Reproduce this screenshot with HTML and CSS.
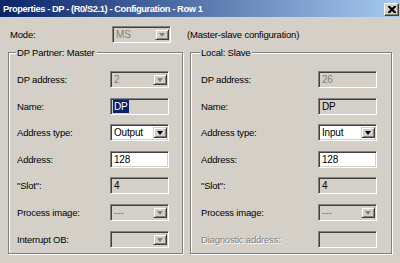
FILE: index.html
```html
<!DOCTYPE html>
<html lang="en">
<head>
    <meta charset="UTF-8">
    <title>Properties - DP - (R0/S2.1) - Configuration - Row 1</title>
    <link rel="stylesheet" href="styles.css">
</head>
<body>
    <div class="window">
        <div class="titlebar">
            <span class="title">Properties - DP - (R0/S2.1) - Configuration - Row 1</span>
            <button class="close-btn">
                <svg width="8" height="7" viewBox="0 0 8 7">
                    <path d="M0 0h2l2 2 2-2h2v1l-2.5 2.5L8 6v1H6L4 5 2 7H0V6l2.5-2.5L0 1z" fill="#000"/>
                </svg>
            </button>
        </div>

        <div class="content">
            <div class="mode-row">
                <span class="label">Mode:</span>
                <div class="combo disabled mode-combo">
                    <span class="value">MS</span>
                    <span class="arrow"></span>
                </div>
                <span class="note">(Master-slave configuration)</span>
            </div>

            <div class="groups">
                <fieldset class="group group-left">
                    <legend>DP Partner: Master</legend>
                    <div class="row">
                        <span class="label">DP address:</span>
                        <div class="combo disabled"><span class="value">2</span><span class="arrow"></span></div>
                    </div>
                    <div class="row">
                        <span class="label">Name:</span>
                        <div class="field readonly"><span class="selected">DP</span></div>
                    </div>
                    <div class="row">
                        <span class="label">Address type:</span>
                        <div class="combo"><span class="value">Output</span><span class="arrow"></span></div>
                    </div>
                    <div class="row">
                        <span class="label">Address:</span>
                        <div class="field">128</div>
                    </div>
                    <div class="row">
                        <span class="label">"Slot":</span>
                        <div class="field readonly">4</div>
                    </div>
                    <div class="row">
                        <span class="label">Process image:</span>
                        <div class="combo disabled"><span class="value">---</span><span class="arrow"></span></div>
                    </div>
                    <div class="row">
                        <span class="label">Interrupt OB:</span>
                        <div class="combo disabled"><span class="value"></span><span class="arrow"></span></div>
                    </div>
                </fieldset>

                <fieldset class="group group-right">
                    <legend>Local: Slave</legend>
                    <div class="row">
                        <span class="label">DP address:</span>
                        <div class="field readonly grey">26</div>
                    </div>
                    <div class="row">
                        <span class="label">Name:</span>
                        <div class="field readonly">DP</div>
                    </div>
                    <div class="row">
                        <span class="label">Address type:</span>
                        <div class="combo"><span class="value">Input</span><span class="arrow"></span></div>
                    </div>
                    <div class="row">
                        <span class="label">Address:</span>
                        <div class="field">128</div>
                    </div>
                    <div class="row">
                        <span class="label">"Slot":</span>
                        <div class="field readonly">4</div>
                    </div>
                    <div class="row">
                        <span class="label">Process image:</span>
                        <div class="combo disabled"><span class="value">---</span><span class="arrow"></span></div>
                    </div>
                    <div class="row">
                        <span class="label label-disabled">Diagnostic address:</span>
                        <div class="field readonly"></div>
                    </div>
                </fieldset>
            </div>
        </div>
    </div>
</body>
</html>
```

FILE: styles.css
```css
body {
    margin: 0;
    background: #d4d0c8;
    font-family: "Liberation Sans", Arial, sans-serif;
    font-size: 9.5px;
    letter-spacing: -0.2px;
    color: #000;
}

.window {
    width: 400px;
    height: 263px;
    overflow: hidden;
}

.titlebar {
    height: 17px;
    display: flex;
    align-items: center;
    justify-content: space-between;
    padding: 0 1px 0 3px;
    background: linear-gradient(to right, #0a246a, #a6caf0);
}

.title {
    color: #fff;
    font-weight: bold;
    font-size: 9.3px;
    letter-spacing: -0.4px;
}

.close-btn {
    width: 15px;
    height: 13px;
    margin-top: 1px;
    padding: 0;
    display: flex;
    align-items: center;
    justify-content: center;
    background: #d4d0c8;
    border: 1px solid;
    border-color: #fff #404040 #404040 #fff;
    box-shadow: inset -1px -1px 0 #808080;
}

.content {
    padding: 8px 0 0 0;
}

.mode-row {
    display: flex;
    align-items: center;
    height: 18px;
    padding-left: 10px;
}

.mode-row .label {
    width: 102px;
}

.mode-combo {
    width: 59px;
    height: 18px;
}

.note {
    margin-left: 16px;
}

.groups {
    display: flex;
    gap: 7px;
    padding-left: 8px;
    margin-top: 3px;
}

.group {
    margin: 0;
    padding: 12px 0 0 0;
    min-width: 0;
    height: 208px;
    box-sizing: border-box;
    border: 1px solid #808080;
    box-shadow: inset 1px 1px 0 #fff, 1px 1px 0 #fff;
    display: flex;
    flex-direction: column;
    gap: 9.6px;
}

.group legend {
    padding: 0 2px 0 1px;
    background: #d4d0c8;
    line-height: 13px;
}

.group-left {
    width: 175px;
    padding-left: 8px;
    padding-right: 13px;
}

.group-left legend {
    margin-left: -1px;
}

.group-right {
    width: 202px;
    padding-left: 10px;
    padding-right: 14px;
}

.group-right legend {
    margin-left: -1px;
}

.row {
    display: flex;
    align-items: center;
    justify-content: space-between;
    height: 17px;
}

.label-disabled {
    color: #808080;
    text-shadow: 1px 1px 0 #fff;
}

.field,
.combo {
    width: 59px;
    height: 17px;
    box-sizing: border-box;
    border: 1px solid;
    border-color: #808080 #fff #fff #808080;
    box-shadow: inset 1px 1px 0 #404040, inset -1px -1px 0 #d4d0c8;
    background: #fff;
    display: flex;
    align-items: center;
    padding: 0 2px 0 3px;
    line-height: 13px;
    font-size: 10px;
}

.field.readonly {
    background: #d4d0c8;
}

.field.grey {
    color: #808080;
}

.selected {
    background: #0a246a;
    color: #fff;
    padding: 0 1px;
    margin-left: -1px;
}

.combo {
    justify-content: space-between;
}

.combo.disabled {
    background: #d4d0c8;
    color: #808080;
}

.arrow {
    width: 14px;
    height: 11px;
    box-sizing: border-box;
    border: 1px solid;
    border-color: #d4d0c8 #404040 #404040 #d4d0c8;
    box-shadow: inset 1px 1px 0 #fff, inset -1px -1px 0 #808080;
    background: #d4d0c8;
    position: relative;
    margin-right: -1px;
}

.arrow::after {
    content: "";
    position: absolute;
    left: 3px;
    top: 3px;
    border-left: 3.5px solid transparent;
    border-right: 3.5px solid transparent;
    border-top: 4px solid #000;
}

.combo.disabled .arrow::after {
    border-top-color: #808080;
}
```
